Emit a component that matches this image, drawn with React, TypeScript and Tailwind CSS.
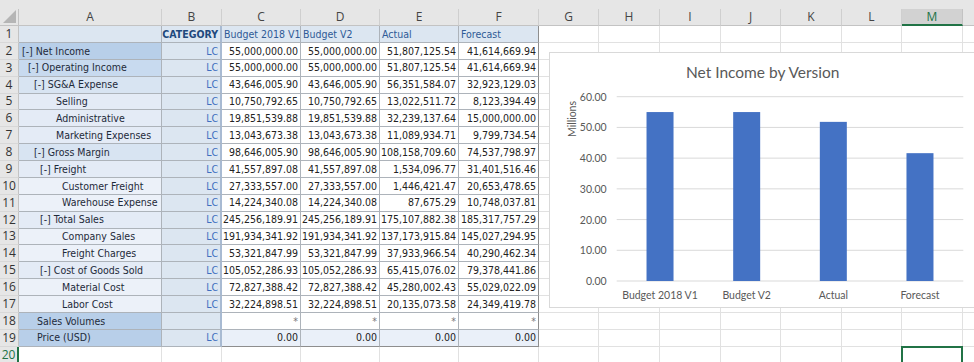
import React from "react";

const L0 = "bg-[#b8cfe9]";
const L1 = "bg-[#c8daef]";
const L2 = "bg-[#d8e4f2]";
const L3 = "bg-[#e4ebf6]";
const L4 = "bg-[#ecf1f9]";

type Row = { label: string; pl: string; bg: string; cat: string; vals: string[]; tint?: boolean };

const rows: Row[] = [
  { label: "[-] Net Income", pl: "pl-[3px]", bg: L0, cat: "LC", vals: ["55,000,000.00", "55,000,000.00", "51,807,125.54", "41,614,669.94"] },
  { label: "[-] Operating Income", pl: "pl-[9px]", bg: L1, cat: "LC", vals: ["55,000,000.00", "55,000,000.00", "51,807,125.54", "41,614,669.94"] },
  { label: "[-] SG&A Expense", pl: "pl-[15px]", bg: L2, cat: "LC", vals: ["43,646,005.90", "43,646,005.90", "56,351,584.07", "32,923,129.03"] },
  { label: "Selling", pl: "pl-[37px]", bg: L3, cat: "LC", vals: ["10,750,792.65", "10,750,792.65", "13,022,511.72", "8,123,394.49"] },
  { label: "Administrative", pl: "pl-[37px]", bg: L3, cat: "LC", vals: ["19,851,539.88", "19,851,539.88", "32,239,137.64", "15,000,000.00"] },
  { label: "Marketing Expenses", pl: "pl-[37px]", bg: L3, cat: "LC", vals: ["13,043,673.38", "13,043,673.38", "11,089,934.71", "9,799,734.54"] },
  { label: "[-] Gross Margin", pl: "pl-[15px]", bg: L2, cat: "LC", vals: ["98,646,005.90", "98,646,005.90", "108,158,709.60", "74,537,798.97"] },
  { label: "[-] Freight", pl: "pl-[21px]", bg: L3, cat: "LC", vals: ["41,557,897.08", "41,557,897.08", "1,534,096.77", "31,401,516.46"] },
  { label: "Customer Freight", pl: "pl-[43px]", bg: L4, cat: "LC", vals: ["27,333,557.00", "27,333,557.00", "1,446,421.47", "20,653,478.65"] },
  { label: "Warehouse Expense", pl: "pl-[43px]", bg: L4, cat: "LC", vals: ["14,224,340.08", "14,224,340.08", "87,675.29", "10,748,037.81"] },
  { label: "[-] Total Sales", pl: "pl-[21px]", bg: L3, cat: "LC", vals: ["245,256,189.91", "245,256,189.91", "175,107,882.38", "185,317,757.29"] },
  { label: "Company Sales", pl: "pl-[43px]", bg: L4, cat: "LC", vals: ["191,934,341.92", "191,934,341.92", "137,173,915.84", "145,027,294.95"] },
  { label: "Freight Charges", pl: "pl-[43px]", bg: L4, cat: "LC", vals: ["53,321,847.99", "53,321,847.99", "37,933,966.54", "40,290,462.34"] },
  { label: "[-] Cost of Goods Sold", pl: "pl-[21px]", bg: L3, cat: "LC", vals: ["105,052,286.93", "105,052,286.93", "65,415,076.02", "79,378,441.86"] },
  { label: "Material Cost", pl: "pl-[43px]", bg: L4, cat: "LC", vals: ["72,827,388.42", "72,827,388.42", "45,280,002.43", "55,029,022.09"] },
  { label: "Labor Cost", pl: "pl-[43px]", bg: L4, cat: "LC", vals: ["32,224,898.51", "32,224,898.51", "20,135,073.58", "24,349,419.78"] },
  { label: "Sales Volumes", pl: "pl-[18px]", bg: L0, cat: "", vals: ["*", "*", "*", "*"] },
  { label: "Price (USD)", pl: "pl-[18px]", bg: L0, cat: "LC", vals: ["0.00", "0.00", "0.00", "0.00"], tint: true },
];

// N is only a sliver at the right edge, so its letter is not shown
const letters = ["A", "B", "C", "D", "E", "F", "G", "H", "I", "J", "K", "L", "M", ""];
const versions = ["Budget 2018 V1", "Budget V2", "Actual", "Forecast"];
const netIncome = [55.0, 55.0, 51.807, 41.615];

const hdr = "bg-[#e6e6e6] border-b border-[#c3c3c3] text-[#444] font-['Open_Sans',sans-serif] text-[12px] flex items-center justify-center";
const rowHdr = "bg-[#e6e6e6] border-r border-b border-r-[#c3c3c3] border-b-[#d8d8d8] text-[#333] font-['Open_Sans',sans-serif] text-[12px] flex items-center justify-center";
const blank = "border-r border-b border-[#e1e1e1] bg-white";
const cell = "flex items-center whitespace-nowrap overflow-hidden border-b border-r border-[#adb3ba] leading-none";

function Corner() {
  return (
    <div className="bg-[#e6e6e6] border-b border-r border-[#c3c3c3] flex items-end justify-end pr-[2px] pb-[2px]">
      <svg width="13" height="13" viewBox="0 0 13 13">
        <polygon points="13,0 13,13 0,13" fill="#b5b5b5" />
      </svg>
    </div>
  );
}

function Chart() {
  const x0 = 66.7;
  const x1 = 413.3;
  const yZero = 228;
  const yTop = 43.7;
  const scale = (yZero - yTop) / 60;
  const band = (x1 - x0) / 4;
  const ticks = [0, 10, 20, 30, 40, 50, 60];
  return (
    <div className="absolute left-[549px] top-[52px] w-[440px] h-[256px] bg-white border border-[#d9d9d9]">
      <svg width="438" height="254" className="font-['Lato',sans-serif]">
        <text x="212.7" y="19" textAnchor="middle" dominantBaseline="central" fontSize="15.5" fill="#595959">
          Net Income by Version
        </text>
        {ticks.map((t) => {
          const y = yZero - t * scale;
          return (
            <g key={t}>
              <line x1={x0} x2={x1} y1={y} y2={y} stroke="#d9d9d9" strokeWidth="1" />
              <text x="56.7" y={y} textAnchor="end" dominantBaseline="central" fontSize="10.5" fill="#595959">
                {t.toFixed(2)}
              </text>
            </g>
          );
        })}
        <text
          x="22"
          y="66"
          transform="rotate(-90 22 66)"
          textAnchor="middle"
          dominantBaseline="central"
          fontSize="10.5"
          fill="#595959"
        >
          Millions
        </text>
        {netIncome.map((v, i) => {
          const cx = x0 + band * i + band / 2;
          const top = yZero - v * scale;
          return <rect key={i} x={cx - 13.5} y={top} width="27" height={yZero - top} fill="#4472c4" />;
        })}
        {versions.map((v, i) => (
          <text key={v} x={x0 + band * i + band / 2} y="242" textAnchor="middle" dominantBaseline="central" fontSize="10.5" fill="#595959">
            {v}
          </text>
        ))}
      </svg>
    </div>
  );
}

export default function App() {
  return (
    <div className="relative w-[974px] h-[362px] overflow-hidden bg-white font-['DejaVu_Sans_Condensed','Liberation_Sans',sans-serif] text-[10.5px] text-[#222]">
      <div className="h-[9px] bg-[#e6e6e6]" />
      <div className="grid grid-cols-[19px_143px_60px_79px_79px_79px_80px_60px_61px_61px_60px_61px_60px_61px_50px] grid-rows-[17px_repeat(20,16.88px)]">
        {/* column headers */}
        <Corner />
        {letters.map((l, i) =>
          l === "M" ? (
            <div key={i} className="bg-[#d2d2d2] border-b-2 border-r border-b-[#217346] border-r-[#c3c3c3] text-[#217346] font-['Open_Sans',sans-serif] text-[12px] flex items-center justify-center">
              {l}
            </div>
          ) : (
            <div key={i} className={`${hdr} border-r border-r-[#cfcfcf]`}>
              {l}
            </div>
          )
        )}

        {/* row 1 */}
        <div className={rowHdr}>1</div>
        <div className={`${cell} bg-[#dce6f1]`} />
        <div className={`${cell} bg-[#dce6f1] justify-end pr-[2px] font-bold text-[#1f497d] border-r-2 border-r-[#a8bad2]`}>CATEGORY</div>
        {versions.map((v, i) => (
          <div key={v} className={`${cell} bg-[#dce6f1] pl-[2px] text-[#2f5a96] ${i === 3 ? "border-r-[#8e8e8e]" : ""}`}>
            {v}
          </div>
        ))}
        {letters.slice(6).map((l, i) => (
          <div key={i} className={blank} />
        ))}

        {/* data rows */}
        {rows.map((r, idx) => (
          <React.Fragment key={idx}>
            <div className={rowHdr}>{idx + 2}</div>
            <div className={`${cell} ${r.bg} ${r.pl} text-[#1e2a3a]`}>{r.label}</div>
            <div className={`${cell} bg-[#dce6f1] justify-end pr-[2px] text-[#3f6fc0] border-r-2 border-r-[#a8bad2]`}>{r.cat}</div>
            {r.vals.map((v, i) => (
              <div
                key={i}
                className={`${cell} justify-end pr-[2px] ${r.tint ? "bg-[#eaf0f9]" : "bg-white"} ${v === "*" ? "text-[#777]" : ""} ${i === 3 ? "border-r-[#8e8e8e]" : ""} ${idx === rows.length - 1 ? "border-b-[#8e8e8e]" : ""}`}
              >
                {v}
              </div>
            ))}
            {letters.slice(6).map((l, i) => (
              <div key={i} className={blank} />
            ))}
          </React.Fragment>
        ))}

        {/* row 20 */}
        <div className="bg-[#e6e6e6] border-r-2 border-b border-r-[#217346] border-b-[#d8d8d8] text-[#217346] font-['Open_Sans',sans-serif] text-[12px] flex items-center justify-center">
          20
        </div>
        {letters.map((l, i) =>
          l === "M" ? (
            <div key={i} className={`${blank} relative`}>
              <div className="absolute -left-[1px] -top-[1px] w-[62px] h-[20px] border-2 border-[#217346]" />
            </div>
          ) : (
            <div key={i} className={blank} />
          )
        )}
      </div>
      <Chart />
    </div>
  );
}
